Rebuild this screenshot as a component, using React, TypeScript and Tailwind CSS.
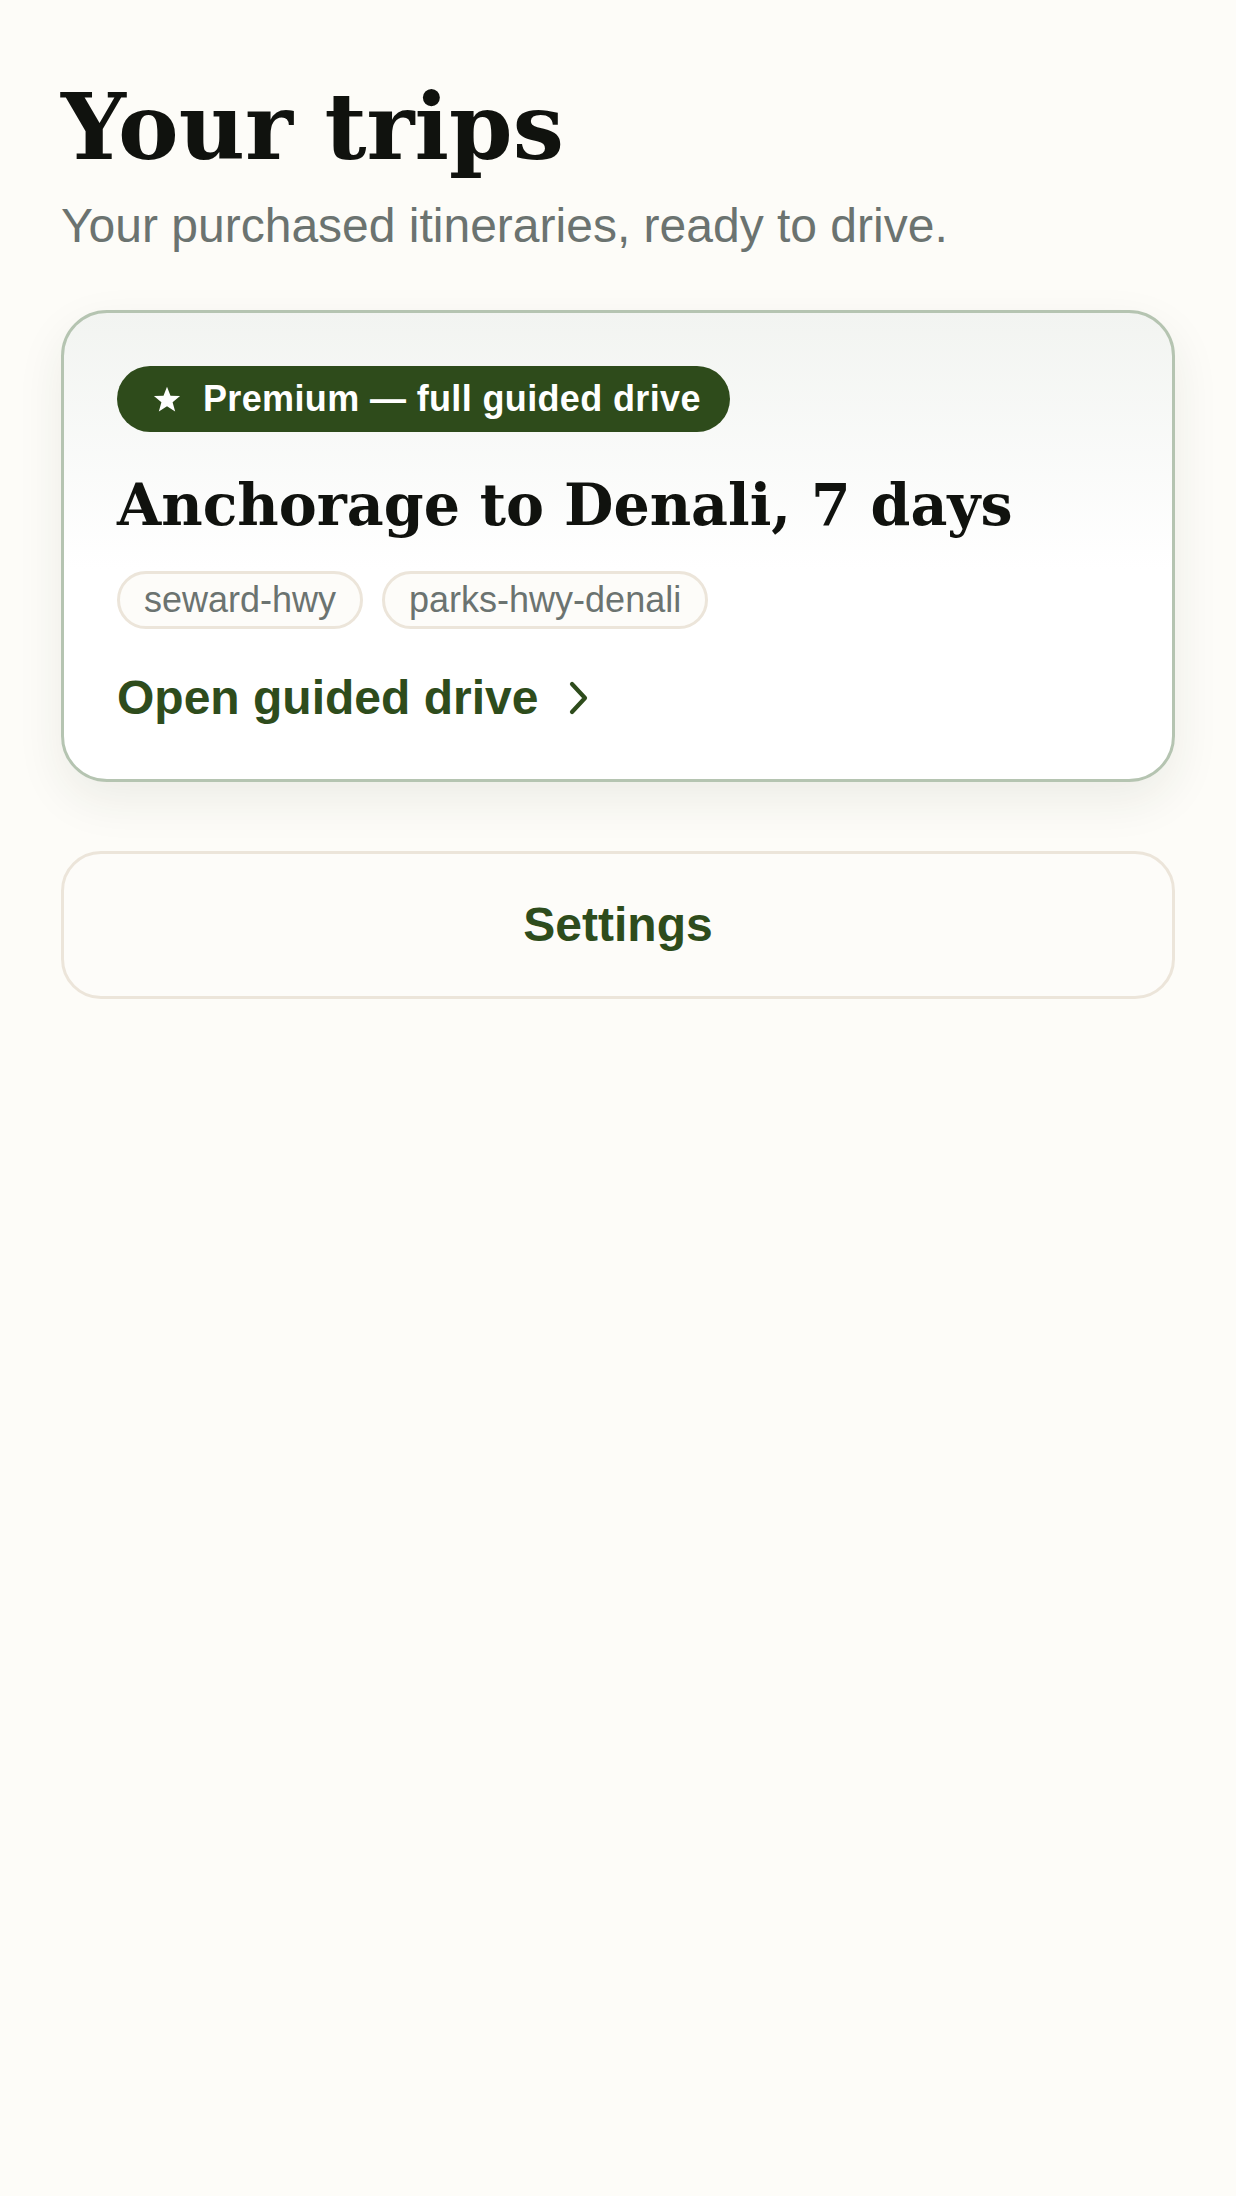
import * as React from "react";

const serif = "font-['DejaVu_Serif',Georgia,serif]";
const sans = "font-['Liberation_Sans',Arial,sans-serif]";

const StarIcon = () => (
  <svg width="28" height="27" viewBox="0 0 24 23" className="shrink-0">
    <polygon
      points="12,0.5 15,8.2 23.2,8.6 16.8,13.8 19,21.8 12,17.2 5,21.8 7.2,13.8 0.8,8.6 9,8.2"
      fill="#ffffff"
    />
  </svg>
);

const Chevron = () => (
  <svg width="22" height="34" viewBox="0 0 22 34" className="shrink-0">
    <polyline
      points="4,3 17,17 4,31"
      fill="none"
      stroke="#2e4c1c"
      strokeWidth="4.2"
      strokeLinecap="round"
      strokeLinejoin="round"
    />
  </svg>
);

const Tag = ({ label }: { label: string }) => (
  <span
    className={`${sans} flex h-[58px] items-center rounded-full border-[3px] border-[#ece5da] bg-[#fdfcf9] px-[24px] text-[36px] text-[#6b7370]`}
  >
    {label}
  </span>
);

export default function App() {
  return (
    <div className="min-h-[2196px] bg-[#fdfcf8] px-[61px] pt-[82px]">
      <h1
        className={`${serif} text-[91px] font-bold leading-[90px] text-[#10120e]`}
      >
        Your trips
      </h1>
      <p
        className={`${sans} mt-[26px] text-[48px] leading-[56px] text-[#6b7370]`}
      >
        Your purchased itineraries, ready to drive.
      </p>

      <div className="mt-[56px] rounded-[46px] border-[3px] border-[#b5c4b1] bg-gradient-to-b from-[#f2f4f1] via-[#ffffff] via-55% to-[#ffffff] p-[53px] shadow-[0_18px_48px_rgba(40,50,30,0.08)]">
        <div
          className={`${sans} inline-flex h-[66px] items-center gap-[22px] rounded-full bg-[#2e4b1b] pl-[36px] pr-[29px] text-[36px] font-bold tracking-[0.01em] text-white`}
        >
          <StarIcon />
          <span>Premium — full guided drive</span>
        </div>
        <h2
          className={`${serif} mt-[39px] text-[57px] font-bold leading-[68px] text-[#10120e]`}
        >
          Anchorage to Denali, 7 days
        </h2>
        <div className="mt-[32px] flex gap-[19px]">
          <Tag label="seward-hwy" />
          <Tag label="parks-hwy-denali" />
        </div>
        <a
          href="#"
          className={`${sans} mt-[41px] flex items-center gap-[30px] text-[48px] font-bold leading-[56px] text-[#2e4c1c]`}
        >
          <span>Open guided drive</span>
          <Chevron />
        </a>
      </div>

      <button
        className={`${sans} mt-[69px] flex h-[148px] w-full items-center justify-center rounded-[40px] border-[3px] border-[#ece5da] bg-[#fdfcf9] text-[48px] font-bold text-[#2e4c1c]`}
      >
        Settings
      </button>
    </div>
  );
}
